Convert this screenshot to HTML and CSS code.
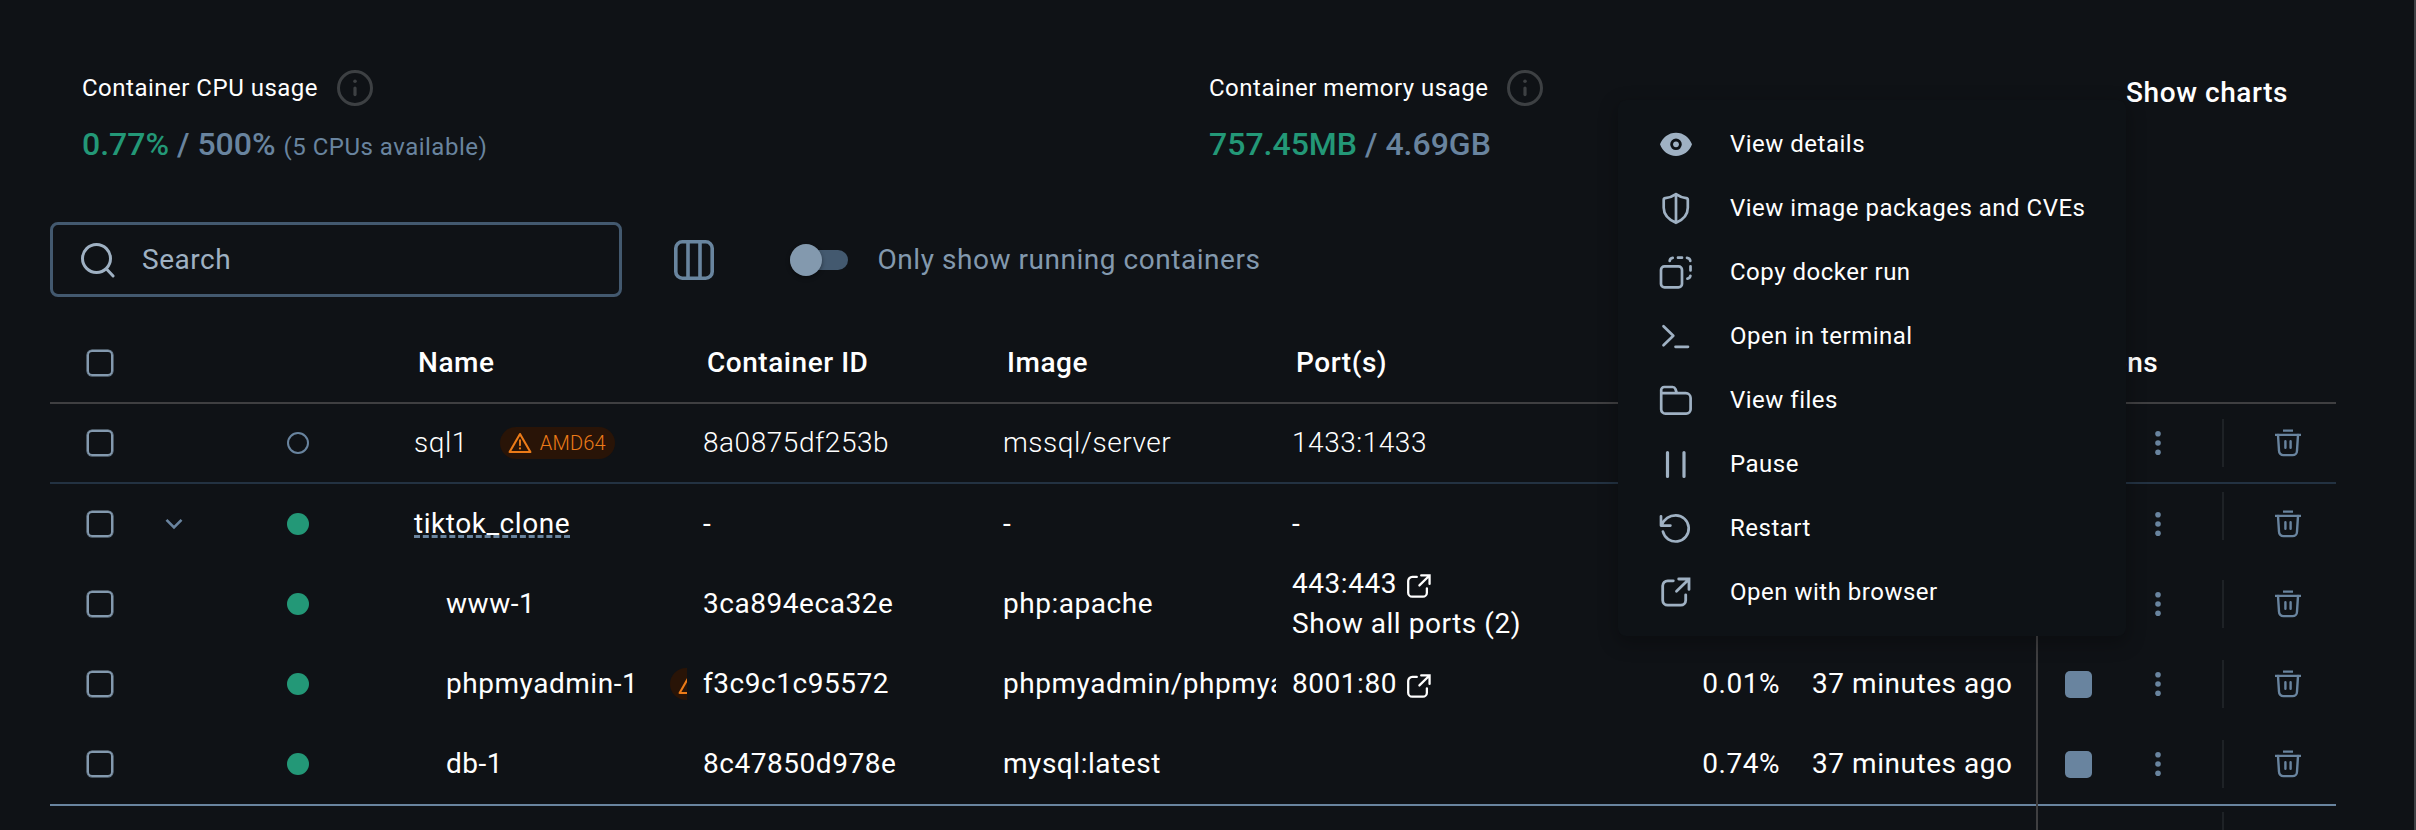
FILE: index.html
```html
<!DOCTYPE html>
<html lang="en">
<head>
<meta charset="utf-8">
<title>Containers</title>
<link rel="stylesheet" href="styles.css">
</head>
<body>
<svg class="defs" width="0" height="0" aria-hidden="true">
  <symbol id="info" viewBox="0 0 36 36"><circle cx="18" cy="18" r="16.5" fill="none" stroke="currentColor" stroke-width="3"/><circle cx="18" cy="11.2" r="1.8" fill="currentColor"/><path d="M18 18v6.6" fill="none" stroke="currentColor" stroke-width="3.2" stroke-linecap="round"/></symbol>
  <symbol id="external" viewBox="0 0 32 32"><path d="M13.3 4.8H7.7a5 5 0 0 0-5 5v14.4a5 5 0 0 0 5 5h13a5 5 0 0 0 5-5v-5.4M16.5 15.3 28.6 3.4M18.7 3h10.3v10.4" fill="none" stroke="currentColor" stroke-width="2.8" stroke-linecap="round"/></symbol>
  <symbol id="trash" viewBox="0 0 28 30"><path d="M9 2.600h10M1 6.900h26" fill="none" stroke="currentColor" stroke-width="2.200"/><path d="M4 7l1 15.700a4.400 4.400 0 0 0 4.400 4.400h9.200a4.400 4.400 0 0 0 4.400-4.400L24 7M11.400 13.200v6.600M16.600 13.200v6.600" fill="none" stroke="currentColor" stroke-width="2.400" stroke-linecap="round"/></symbol>
  <symbol id="kebab" viewBox="0 0 6 26"><circle cx="3" cy="3.7" r="2.8" fill="currentColor"/><circle cx="3" cy="13" r="2.8" fill="currentColor"/><circle cx="3" cy="22.3" r="2.8" fill="currentColor"/></symbol>
  <symbol id="warning" viewBox="0 0 24 22"><path d="M12 2 22.4 20H1.6z" fill="none" stroke="currentColor" stroke-width="2.1" stroke-linejoin="round"/><path d="M12 8.2v5" fill="none" stroke="currentColor" stroke-width="1.9" stroke-linecap="round"/><circle cx="12" cy="16.4" r="1.1" fill="currentColor"/></symbol>
</svg>

<main class="app">
  <header class="stats">
    <section class="stat stat-cpu">
      <div class="stat-label">Container CPU usage <svg class="info"><use href="#info"/></svg></div>
      <div class="stat-value"><span class="used">0.77%</span> / 500% <small>(5 CPUs available)</small></div>
    </section>
    <section class="stat">
      <div class="stat-label">Container memory usage <svg class="info"><use href="#info"/></svg></div>
      <div class="stat-value"><span class="used">757.45MB</span> / 4.69GB</div>
    </section>
    <a class="show-charts">Show charts</a>
  </header>

  <div class="toolbar">
    <div class="search">
      <svg width="36" height="36" viewBox="0 0 36 36" fill="none" stroke="currentColor" stroke-width="3" stroke-linecap="round"><circle cx="16.5" cy="16.5" r="14"/><path d="m26.5 27 6.6 7"/></svg>
      <span>Search</span>
    </div>
    <svg class="columns" width="40" height="40" viewBox="0 0 40 40" fill="none" stroke="currentColor" stroke-width="3.6"><rect x="1.8" y="1.8" width="36.4" height="36.4" rx="6.5"/><path d="M14 2v36M26 2v36"/></svg>
    <div class="toggle"><span class="knob"></span></div>
    <span class="toggle-label">Only show running containers</span>
  </div>

  <div class="table">
    <div class="row head">
      <div class="check"><i></i></div><div></div><div></div>
      <div class="cell">Name</div><div class="cell">Container ID</div><div class="cell">Image</div><div class="cell">Port(s)</div>
      <div></div><div></div><div class="cell actions-title">Actions</div>
    </div>
    <div class="row stopped">
      <div class="check"><i></i></div><div></div><div class="status"><i></i></div>
      <div class="cell name">sql1 <span class="badge"><svg><use href="#warning"/></svg>AMD64</span></div>
      <div class="cell">8a0875df253b</div><div class="cell">mssql/server</div><div class="cell">1433:1433</div>
      <div></div><div></div>
      <div class="actions"><span></span><svg class="kebab"><use href="#kebab"/></svg><b class="divider"></b><svg class="trash"><use href="#trash"/></svg></div>
    </div>
    <div class="row group">
      <div class="check"><i></i></div>
      <div class="chevron"><svg width="18" height="12" viewBox="0 0 18 12" fill="none" stroke="currentColor" stroke-width="2.6"><path d="m1.5 1.8 7.5 7.7 7.5-7.7"/></svg></div>
      <div class="status running"><i></i></div>
      <div class="cell name"><a class="group-link">tiktok_clone</a></div>
      <div class="cell">-</div><div class="cell">-</div><div class="cell">-</div>
      <div></div><div></div>
      <div class="actions"><span></span><svg class="kebab"><use href="#kebab"/></svg><b class="divider"></b><svg class="trash"><use href="#trash"/></svg></div>
    </div>
    <div class="row">
      <div class="check"><i></i></div><div></div><div class="status running"><i></i></div>
      <div class="cell name child">www-1</div>
      <div class="cell">3ca894eca32e</div><div class="cell">php:apache</div>
      <div class="cell ports"><div class="port">443:443 <svg class="external"><use href="#external"/></svg></div><div class="port">Show all ports (2)</div></div>
      <div></div><div></div>
      <div class="actions"><span></span><svg class="kebab"><use href="#kebab"/></svg><b class="divider"></b><svg class="trash"><use href="#trash"/></svg></div>
    </div>
    <div class="row">
      <div class="check"><i></i></div><div></div><div class="status running"><i></i></div>
      <div class="cell name child">phpmyadmin-1 <span class="badge"><svg><use href="#warning"/></svg></span></div>
      <div class="cell">f3c9c1c95572</div><div class="cell">phpmyadmin/phpmyadmin</div>
      <div class="cell"><div class="port">8001:80 <svg class="external"><use href="#external"/></svg></div></div>
      <div class="cell cpu">0.01%</div><div class="cell">37 minutes ago</div>
      <div class="actions"><span class="stop"></span><svg class="kebab"><use href="#kebab"/></svg><b class="divider"></b><svg class="trash"><use href="#trash"/></svg></div>
    </div>
    <div class="row last">
      <div class="check"><i></i></div><div></div><div class="status running"><i></i></div>
      <div class="cell name child">db-1</div>
      <div class="cell">8c47850d978e</div><div class="cell">mysql:latest</div><div></div>
      <div class="cell cpu">0.74%</div><div class="cell">37 minutes ago</div>
      <div class="actions"><span class="stop"></span><svg class="kebab"><use href="#kebab"/></svg><b class="divider"></b><svg class="trash"><use href="#trash"/></svg></div>
    </div>
    <div class="row next">
      <div></div><div></div><div></div><div></div><div></div><div></div><div></div><div></div><div></div>
      <div class="actions"><span></span><span></span><b class="divider"></b><span></span></div>
    </div>
  </div>

  <nav class="menu">
    <a class="menu-item"><svg viewBox="0 0 32 32"><path fill="currentColor" fill-rule="evenodd" d="M16 4.700C8.500 4.700 2.400 9.500 0 16.300 2.400 23.200 8.500 28 16 28s13.600-4.800 16-11.700C29.600 9.500 23.500 4.700 16 4.700zm0 5.800a5.800 5.800 0 1 1 0 11.600 5.800 5.800 0 0 1 0-11.600z"/><circle cx="16" cy="16.300" r="2.900" fill="currentColor"/></svg>View details</a>
    <a class="menu-item"><svg viewBox="0 0 32 32"><path class="line" d="M16 2.200c3.400 2.400 7 3.600 10.200 4 .8.100 1.600.7 1.600 1.500v8c0 7.200-5.500 12.300-11.800 15.100C9.700 28 3.700 22.900 3.700 15.700v-8c0-.8.800-1.400 1.600-1.500C9 5.800 12.600 4.600 16 2.200zM16 2.200v28.500"/></svg>View image packages and CVEs</a>
    <a class="menu-item"><svg viewBox="0 0 32 32"><rect class="line" x="1" y="10.400" width="21" height="21" rx="3.500"/><path class="line" d="M9.700 5V4.800a3.400 3.400 0 0 1 3-3M18 1.700h4M27 1.800a3.600 3.600 0 0 1 3.300 3.100M30.500 10.300v4.200M30.400 19.800a3.300 3.300 0 0 1-3 2.800"/></svg>Copy docker run</a>
    <a class="menu-item"><svg viewBox="0 0 32 32"><path class="line" d="m3.500 6.300 9.800 9.500-9.800 9.500M15.500 26.800h12.500"/></svg>Open in terminal</a>
    <a class="menu-item"><svg viewBox="0 0 32 32"><path class="line" d="M1.200 9.200h24.600a4.800 4.800 0 0 1 4.800 4.800v11.200a4.400 4.400 0 0 1-4.400 4.400H5.400a4.200 4.200 0 0 1-4.200-4.200V6a3 3 0 0 1 3-3h8.400c1.400 0 2.300.8 2.800 2l1.300 3.800"/></svg>View files</a>
    <a class="menu-item"><svg viewBox="0 0 32 32"><path class="line pause" d="M7.500 4.500v24M24 4.500v24"/></svg>Pause</a>
    <a class="menu-item"><svg viewBox="0 0 32 32"><path class="line" d="M1 4.300v9.300h9.400M1.600 13C4.500 6.500 9.800 3.300 15.800 3.300a13.100 13.100 0 1 1-12.900 16.200"/></svg>Restart</a>
    <a class="menu-item"><svg><use href="#external"/></svg>Open with browser</a>
  </nav>
</main>
</body>
</html>
```
FILE: styles.css
```css
* { box-sizing: border-box; }
body {
  margin: 0;
  background: #0f1216;
  color: #fff;
  font: 400 28px/40px Roboto, "Liberation Sans", sans-serif;
  letter-spacing: 0.54px;
}
.defs { position: absolute; }
.app {
  position: relative;
  height: 830px;
  padding: 64px 78px 0 50px;
  overflow: hidden;
  border-right: 2px solid #3e4145;
  display: flex;
  flex-direction: column;
}
svg { display: block; flex: none; overflow: visible; }

/* usage summary */
.stats { display: flex; height: 158px; padding: 0 48px 0 32px; }
.stat-cpu { width: 1127px; }
.stat-label { display: flex; align-items: center; gap: 18.500px; height: 48px; font-size: 24px; letter-spacing: 0.5px; }
.info { width: 36px; height: 36px; color: #3d4043; }
.stat-value { margin-top: 8px; height: 48px; line-height: 48px; font-size: 32px; font-weight: 500; letter-spacing: 0; color: #69849f; }
.stat-value .used { color: #239877; }
.stat-value small { font-size: 24px; font-weight: 400; letter-spacing: 0.5px; }
.show-charts { margin-left: auto; height: 58px; line-height: 58px; font-weight: 500; letter-spacing: 0.56px; }

/* toolbar */
.toolbar { display: flex; align-items: center; height: 76px; }
.search {
  display: flex; align-items: center; align-self: flex-start; gap: 26px;
  width: 572px; height: 75px; padding: 0 27px;
  border: 3px solid #43596f; border-radius: 8px; color: #9fb1c3;
}
.columns { margin-left: 52px; color: #69859f; }
.toggle { display: flex; align-items: center; margin: 0 29.500px 0 76px; width: 58px; height: 20px; border-radius: 10px; background: #43596f; }
.knob { flex: none; width: 32px; height: 32px; border-radius: 50%; background: #8399ae; box-shadow: 0 2px 4px rgba(0,0,0,.4); }
.toggle-label { color: #8399ae; }

/* container table */
.table { margin-top: 26px; }
.row { display: grid; grid-template-columns: 100px 48px 200px 289px 300px 289px 344px 176px 240px 300px; height: 80px; align-items: center; }
.head { border-bottom: 2px solid #3f3f41; font-weight: 500; }
.head .cell { padding-left: 20px; }
.stopped { border-bottom: 2px solid #233242; font-weight: 300; }
.last { height: 82px; border-bottom: 2px solid #69849f; }
.next { height: 24px; }
.check { padding-left: 37px; }
.check i { display: block; width: 26px; height: 26px; border: 2px solid #8399ae; border-radius: 5px; box-shadow: 0 0 0 0.500px #8399ae; }
.chevron, .status { display: grid; place-items: center; }
.chevron { color: #69849f; }
.status i { width: 22px; height: 22px; border: 2px solid #69849f; border-radius: 50%; }
.status.running i { border: 0; background: #239877; }
.cell { padding-left: 16px; overflow: hidden; white-space: nowrap; }
.name { display: flex; align-items: center; height: 40px; }
.name.child { padding-left: 48px; }
.head .actions-title { padding-left: 23px; }
.badge {
  display: flex; align-items: center; gap: 8px; flex: none;
  height: 32px; margin-left: 32px; padding: 0 9px 0 8px;
  border-radius: 16px; background: #291407; color: #ec7b18;
  font-size: 20px; letter-spacing: 0.200px;
}
.badge svg { width: 24px; height: 22px; }
.group-link { line-height: 22px; height: 25px; margin-bottom: -3px; border-bottom: 3px dashed #69849f; }
.port { display: flex; align-items: center; gap: 9px; height: 40px; }
.external { width: 26px; height: 26px; margin-top: 4px; }
.cpu { padding-right: 16px; text-align: right; }
.actions {
  align-self: stretch; display: grid; grid-template-columns: 80px 80px 52px 76px;
  align-items: center; justify-items: center;
  border-left: 2px solid #3f3f41; color: #69849f;
}
.last .actions { margin-bottom: -2px; padding-bottom: 2px; }
.stop { width: 27px; height: 27px; border-radius: 5px; background: #69849f; }
.kebab { width: 6px; height: 26px; }
.divider { justify-self: start; margin-left: 24px; width: 2px; height: 48px; background: #1e2226; }
.group .divider { margin-top: -16px; }
.next .divider { align-self: start; margin-top: 6px; }
.trash { width: 28px; height: 30px; }

/* context menu */
.menu {
  position: absolute; left: 1618px; top: 100px; width: 508px; height: 536px;
  padding: 12px 0; border-radius: 8px; background: #0e1216;
  box-shadow: 0 6px 18px 2px rgba(0,0,0,.25);
  font-size: 24px; letter-spacing: 0.5px;
}
.menu-item { display: flex; align-items: center; gap: 38px; height: 64px; padding-left: 42px; white-space: nowrap; }
.menu-item svg { width: 32px; height: 32px; color: #9fb1c3; }
.line { fill: none; stroke: currentColor; stroke-width: 2.7; stroke-linecap: round; stroke-linejoin: round; }
.line.pause { stroke-width: 3.200; }
```
